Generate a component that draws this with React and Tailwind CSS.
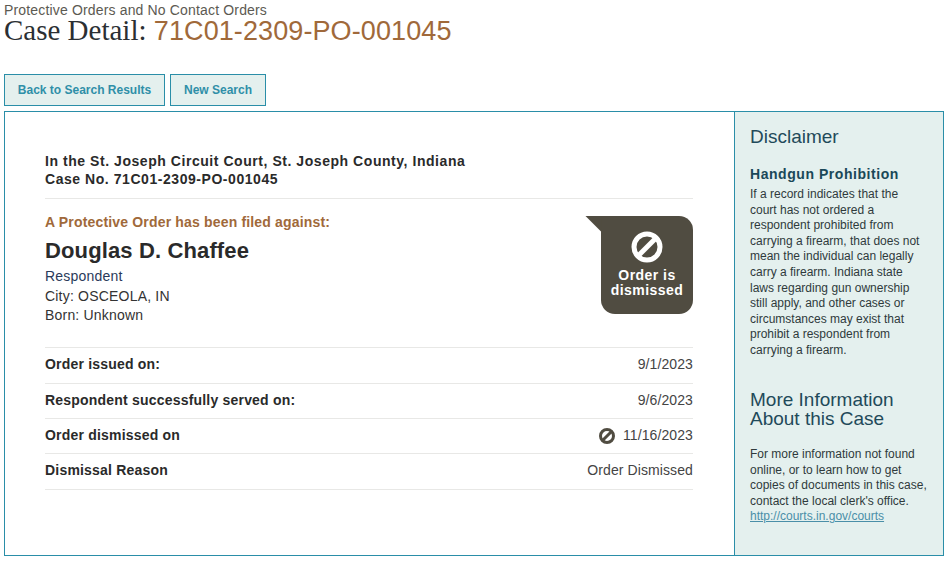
const rows = [
  { label: 'Order issued on:', value: '9/1/2023', h: 'h-[36px] pb-[1px]' },
  { label: 'Respondent successfully served on:', value: '9/6/2023', h: 'h-[35px]' },
  { label: 'Order dismissed on', value: '11/16/2023', icon: true, h: 'h-[35px]' },
  { label: 'Dismissal Reason', value: 'Order Dismissed', h: 'h-[36px] pb-[1px]' },
]

function NoIcon({ className, color, width = 5 }) {
  return (
    <svg viewBox="0 0 32 32" className={className} fill="none" stroke={color} strokeWidth={width}>
      <circle cx="16" cy="16" r="13" />
      <path d="M7 25 25 7" />
    </svg>
  )
}

function Badge() {
  return (
    <div className="relative mt-[2px] h-[98px] w-[92px] rounded-[14px] rounded-tl-none bg-[#504c41] text-center text-white">
      <svg viewBox="0 0 16 16" className="absolute left-[-16px] top-0 h-[16px] w-[17px]" fill="#504c41">
        <path d="M0 0H16V16Z" />
      </svg>
      <div className="flex justify-center pt-[15px]">
        <NoIcon className="h-[32px] w-[32px]" color="#ffffff" />
      </div>
      <div className="mt-[5px] text-[14px] leading-[15px] font-bold tracking-[0.45px]">
        Order is<br />dismissed
      </div>
    </div>
  )
}

export default function App() {
  return (
    <div className="h-[561px] overflow-hidden bg-white px-[4px] font-['Liberation_Sans',Arial,sans-serif] text-[#2a2a2a]">
      <div className="pt-[3px] text-[14px] leading-[14px] tracking-[0.16px] text-[#5c5a52]">Protective Orders and No Contact Orders</div>
      <h1 className="text-[27px] leading-[27px] tracking-[0.1px] whitespace-nowrap">
        <span className="font-['Liberation_Serif',serif] text-[29px] tracking-normal text-[#2b2f33]">Case Detail: </span>
        <span className="text-[#a0693a]">71C01-2309-PO-001045</span>
      </h1>

      <div className="mt-[29px] flex gap-[5px]">
        <button className="h-[32px] w-[161px] border border-[#2a8ea8] bg-[#e4f0ee] text-[12px] font-bold text-[#2f8fa8]">Back to Search Results</button>
        <button className="h-[32px] w-[96px] border border-[#2a8ea8] bg-[#e4f0ee] text-[12px] font-bold text-[#2f8fa8]">New Search</button>
      </div>

      <div className="mt-[5px] flex h-[445px] w-[940px] border border-[#2a8ea8]">
        <main className="w-[729px] pt-[40px] pr-[41px] pl-[40px]">
          <div className="border-b border-[#e8e8e6] pb-[10px] text-[14px] leading-[18px] font-bold tracking-[0.55px]">
            <div>In the St. Joseph Circuit Court, St. Joseph County, Indiana</div>
            <div>Case No. 71C01-2309-PO-001045</div>
          </div>

          <div className="flex justify-between pt-[15px]">
            <div>
              <div className="text-[14px] leading-[16px] font-bold tracking-[0.17px] text-[#a0693a]">A Protective Order has been filed against:</div>
              <div className="mt-[8px] text-[22px] leading-[26px] font-bold tracking-[0.13px]">Douglas D. Chaffee</div>
              <div className="mt-[3px] text-[14px] leading-[19.5px] tracking-[0.2px] text-[#333]">
                <div className="text-[#2a3a5a]">Respondent</div>
                <div>City: OSCEOLA, IN</div>
                <div>Born: Unknown</div>
              </div>
            </div>
            <Badge />
          </div>

          <div className="mt-[21px] border-t border-[#e8e8e6]">
            {rows.map((row) => (
              <div key={row.label} className={`${row.h} flex items-center justify-between border-b border-[#e8e8e6] text-[14px]`}>
                <span className="font-bold tracking-[0.2px]">{row.label}</span>
                <span className="flex items-center gap-[8px] tracking-[0.1px] text-[#444]">
                  {row.icon && <NoIcon className="h-[16px] w-[16px]" color="#504c41" width={6} />}
                  {row.value}
                </span>
              </div>
            ))}
          </div>
        </main>

        <aside className="w-[209px] border-l border-[#2a8ea8] bg-[#e4f0ee] text-[#2f3a3c]">
          <div className="h-[259px] pt-[14px] pr-[16px] pl-[15px]">
            <h2 className="text-[19px] leading-[22px] text-[#1f4a5a]">Disclaimer</h2>
            <h3 className="mt-[17px] text-[14px] leading-[18px] font-bold tracking-[0.55px] text-[#1a4858]">Handgun Prohibition</h3>
            <p className="mt-[4px] text-[12px] leading-[15.6px]">
              If a record indicates that the court has not ordered a respondent prohibited from carrying a firearm, that does not mean the individual can legally carry a firearm. Indiana state laws regarding gun ownership still apply, and other cases or circumstances may exist that prohibit a respondent from carrying a firearm.
            </p>
          </div>
          <div className="pt-[19px] pr-[16px] pl-[15px]">
            <h2 className="text-[19px] leading-[19px] text-[#1f4a5a]">More Information<br />About this Case</h2>
            <p className="mt-[19px] text-[12px] leading-[15.6px]">
              For more information not found online, or to learn how to get copies of documents in this case, contact the local clerk's office.
              <br />
              <a className="text-[#4a8fa8] underline">http://courts.in.gov/courts</a>
            </p>
          </div>
        </aside>
      </div>
    </div>
  )
}
